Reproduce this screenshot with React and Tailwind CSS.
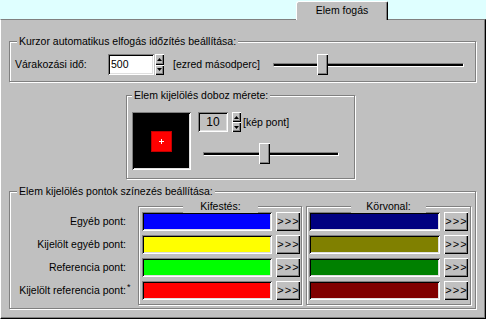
import React from "react";

const sunken =
  "shadow-[inset_1px_1px_0_#808080,inset_-1px_-1px_0_#ffffff,inset_2px_2px_0_#000000,inset_-2px_-2px_0_#dfdfdf]";
const raised =
  "shadow-[inset_1px_1px_0_#ffffff,inset_-1px_-1px_0_#000000,inset_-2px_-2px_0_#808080]";

function Group({ className, label, labelClass, children }) {
  return (
    <div
      className={`relative border border-[#808080] shadow-[1px_1px_0_#ffffff,inset_1px_1px_0_#ffffff] ${className}`}
    >
      <span className={`absolute top-[-7px] bg-[#c0c0c0] leading-[13px] whitespace-nowrap ${labelClass}`}>
        {label}
      </span>
      {children}
    </div>
  );
}

function Arrow({ up }) {
  return (
    <svg width="5" height="3" viewBox="0 0 5 3" className="block">
      {up ? <polygon points="2.5,0 5,3 0,3" fill="#000" /> : <polygon points="0,0 5,0 2.5,3" fill="#000" />}
    </svg>
  );
}

function Spinner({ className }) {
  return (
    <div className={`flex flex-col w-[9px] ${className}`}>
      <div className={`flex-1 bg-[#c0c0c0] ${raised} flex items-center justify-center`}>
        <Arrow up />
      </div>
      <div className={`flex-1 bg-[#c0c0c0] ${raised} flex items-center justify-center`}>
        <Arrow />
      </div>
    </div>
  );
}

function Slider({ className, thumbClass }) {
  return (
    <div className={`relative h-[21px] flex items-center ${className}`}>
      <div className="w-full h-[4px] bg-black border-t border-l border-t-[#808080] border-l-[#808080] border-b border-r border-b-white border-r-white" />
      <div className={`absolute top-0 w-[11px] h-[21px] bg-[#c0c0c0] ${raised} ${thumbClass}`} />
    </div>
  );
}

function ColorRow({ color, barClass }) {
  return (
    <div className="flex">
      <div className={`h-[19px] ${barClass} ${sunken}`} style={{ backgroundColor: color }} />
      <div
        className={`ml-[4px] w-[24px] h-[19px] bg-[#c0c0c0] ${raised} flex items-center justify-center tracking-[1px] text-[11px] leading-[13px] pl-[1px]`}
      >
        &gt;&gt;&gt;
      </div>
    </div>
  );
}

export default function App() {
  const labels = ["Egyéb pont:", "Kijelölt egyéb pont:", "Referencia pont:", "Kijelölt referencia pont:"];
  const fill = ["#0000ff", "#ffff00", "#00ff00", "#ff0000"];
  const outline = ["#000080", "#808000", "#008000", "#800000"];
  return (
    <div className="w-[486px] h-[319px] bg-[#dfffff] flex flex-col font-['Liberation_Sans',Arial,sans-serif] text-[10.5px] leading-[13px] text-black overflow-hidden">
      <div className="h-[19px] shrink-0 flex justify-end items-end pr-[98px]">
        <div className="relative z-10 -mb-px w-[92px] h-[19px] bg-[#c0c0c0] border-t border-l border-white border-r border-r-black rounded-tl-[3px] rounded-tr-[2px] shadow-[inset_-1px_0_0_#808080] flex items-center justify-center pb-[1px]">
          Elem fogás
        </div>
      </div>
      <div className="flex-1 bg-[#c0c0c0] border-t border-t-[#808080] border-l border-l-white border-r border-r-black border-b border-b-black shadow-[inset_-1px_-1px_0_#808080] flex flex-col">
        <Group className="ml-[8px] mt-[21px] w-[467px] h-[41px] shrink-0" labelClass="left-[7px] px-[2px]" label="Kurzor automatikus elfogás időzítés beállítása:">
          <div className="flex items-center pt-[12px]">
            <span className="ml-[5px] w-[93px]">Várakozási idő:</span>
            <div className={`w-[46px] h-[21px] bg-white ${sunken} flex items-center pl-[3px]`}>500</div>
            <Spinner className="ml-[1px] h-[21px]" />
            <span className="ml-[9px]">[ezred másodperc]</span>
            <Slider className="ml-auto mr-[11px] w-[191px]" thumbClass="left-[44px]" />
          </div>
        </Group>

        <Group className="ml-[125px] mt-[13px] w-[229px] h-[84px] shrink-0" labelClass="left-[5px] px-[2px]" label="Elem kijelölés doboz mérete:">
          <div className="flex pt-[16px] pl-[5px]">
            <div className={`w-[59px] h-[58px] bg-black ${sunken} flex items-center justify-center`}>
              <div className="w-[21px] h-[21px] bg-[#ff0000] border border-[#c00000] flex items-center justify-center">
                <svg width="5" height="5" viewBox="0 0 5 5" className="block">
                  <rect x="2" y="0" width="1" height="5" fill="#fff" />
                  <rect x="0" y="2" width="5" height="1" fill="#fff" />
                </svg>
              </div>
            </div>
            <div className="ml-[7px] flex flex-col">
              <div className="flex items-center h-[20px]">
                <div className={`w-[30px] h-[20px] bg-[#c0c0c0] ${sunken} flex items-center justify-center text-[12px]`}>10</div>
                <Spinner className="ml-[4px] h-[20px]" />
                <span className="ml-[2px]">[kép pont]</span>
              </div>
              <Slider className="mt-[11px] ml-[5px] w-[136px]" thumbClass="left-[56px]" />
            </div>
          </div>
        </Group>

        <Group className="ml-[8px] mt-[12px] w-[467px] h-[118px] shrink-0" labelClass="left-[7px] px-[2px]" label="Elem kijelölés pontok színezés beállítása:">
          <div className="flex">
            <div className="w-[128px] flex flex-col items-end pt-[20px] gap-[4px] pr-[6px]">
              {labels.map((l, i) => (
                <div key={l} className="h-[19px] flex items-center whitespace-nowrap">
                  <span>{l}</span>
                  <span className="w-[6px] self-start pt-[2px] pl-[1px] text-[9px] leading-[9px]">{i === 3 ? "*" : ""}</span>
                </div>
              ))}
            </div>
            <Group className="mt-[14px] w-[164px] h-[99px]" labelClass="left-[44px] w-[75px] text-center" label="Kifestés:">
              <div className="flex flex-col gap-[4px] pt-[5px] pl-[3px]">
                {fill.map((c) => (
                  <ColorRow key={c} color={c} barClass="w-[130px]" />
                ))}
              </div>
            </Group>
            <Group className="ml-[4px] mt-[14px] w-[165px] h-[99px]" labelClass="left-[44px] w-[75px] text-center" label="Körvonal:">
              <div className="flex flex-col gap-[4px] pt-[5px] pl-[2px]">
                {outline.map((c) => (
                  <ColorRow key={c} color={c} barClass="w-[131px]" />
                ))}
              </div>
            </Group>
          </div>
        </Group>
      </div>
    </div>
  );
}
